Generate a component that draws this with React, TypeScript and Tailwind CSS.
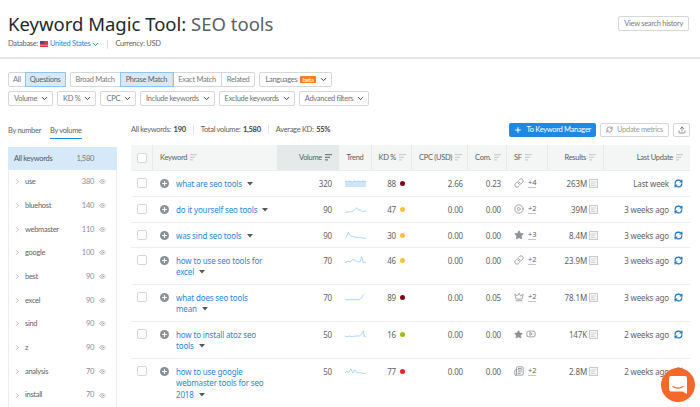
import { ChevronDown, ChevronRight, Eye, Link, CirclePlay, Star, Crown, Newspaper, RefreshCw, Plus, Upload, Youtube } from "lucide-react";

const cols = "grid grid-cols-[22px_124px_62px_33px_40px_56px_39px_41px_56px_86px]";

const sidebar = [
  ["use", "380"],
  ["bluehost", "140"],
  ["webmaster", "110"],
  ["google", "100"],
  ["best", "90"],
  ["excel", "90"],
  ["sind", "90"],
  ["z", "90"],
  ["analysis", "70"],
  ["install", "70"],
];

const rows = [
  { kw: "what are seo tools", vol: "320", trend: "M0 3 L5 4 L9 3 L14 5 L18 3 L22 4 L26 3 L30 4 L34 3 L38 4 L40 3", fill: true, kd: "88", dot: "bg-[#7f0a17]", cpc: "2.66", com: "0.23", sf: "link", more: "+4", res: "263M", upd: "Last week", h: "h-[26px]" },
  { kw: "do it yourself seo tools", vol: "90", trend: "M0 11 L12 10 L17 8 L22 4 L26 8 L29 7 L33 10 L40 9", kd: "47", dot: "bg-[#fdc23c]", cpc: "0.00", com: "0.00", sf: "play", more: "+2", res: "39M", upd: "3 weeks ago", h: "h-[26px]" },
  { kw: "was sind seo tools", vol: "90", trend: "M0 11 L3 9 L6 2 L10 7 L14 8 L18 9 L24 10 L30 10 L40 11", kd: "30", dot: "bg-[#fdc23c]", cpc: "0.00", com: "0.00", sf: "star", more: "+3", res: "8.4M", upd: "3 weeks ago", h: "h-[25px]" },
  { kw: "how to use seo tools for", kw2: "excel", vol: "70", trend: "M0 10 L6 8 L10 9 L15 5 L20 7 L25 9 L29 8 L32 1 L35 10 L40 10", kd: "46", dot: "bg-[#fdc23c]", cpc: "0.00", com: "0.00", sf: "link", more: "+2", res: "23.9M", upd: "3 weeks ago", h: "h-[37px]" },
  { kw: "what does seo tools", kw2: "mean", vol: "70", trend: "M0 10 L26 10 L29 9 L32 7 L35 2", kd: "89", dot: "bg-[#7f0a17]", cpc: "0.00", com: "0.05", sf: "crown", more: "+2", res: "78.1M", upd: "3 weeks ago", h: "h-[37px]" },
  { kw: "how to install atoz seo", kw2: "tools", vol: "50", trend: "M0 9 L4 10 L8 9 L14 10 L20 9 L27 9 L31 7 L35 1 L37 10 L40 10", kd: "16", dot: "bg-[#9bbb14]", cpc: "0.00", com: "0.00", sf: "starvideo", more: "", res: "147K", upd: "2 weeks ago", h: "h-[37px]" },
  { kw: "how to use google", kw2: "webmaster tools for seo", kw3: "2018", vol: "50", trend: "M0 9 L4 6 L7 9 L11 3 L15 9 L19 4 L23 9 L28 8 L33 10 L40 9", kd: "77", dot: "bg-[#f01d26]", cpc: "0.00", com: "0.00", sf: "news", more: "+2", res: "2.8M", upd: "2 weeks ago", h: "h-[50px]" },
];

function Sort({ dark }: { dark?: boolean }) {
  return (
    <svg width="7" height="7" viewBox="0 0 7 7" className="ml-[3px] shrink-0">
      <path d="M0 .7H7M0 3.3H5M0 5.9H3" stroke={dark ? "#5f6368" : "#c4c7c8"} strokeWidth="1" fill="none" />
    </svg>
  );
}

function Caret() {
  return (
    <svg width="6" height="4" viewBox="0 0 6 4" className="inline-block ml-[5px] align-[1px]">
      <path d="M0 0H6L3 3.6Z" fill="#55595c" />
    </svg>
  );
}

function Pill({ label, extra }: { label: string; extra?: React.ReactNode }) {
  return (
    <div className="h-[15px] pl-[5px] pr-[3px] flex items-center gap-[3px] border border-[#d5d8d8] rounded-[2px] text-[#6f7375] bg-white">
      {label}
      {extra}
      <ChevronDown size={9} strokeWidth={2.5} className="text-[#333] shrink-0" />
    </div>
  );
}

function Seg({ label, on, last, tight }: { label: string; on?: boolean; last?: boolean; tight?: boolean }) {
  return (
    <div className={`h-[13px] ${tight ? "px-[4px]" : "px-[5px]"} flex items-center ${on ? "bg-[#d5e9f8] outline outline-[#8fc4ec] text-[#5c6265] z-10" : "text-[#777b7d]"} ${last ? "" : "border-r border-[#d5d8d8]"}`}>
      {label}
    </div>
  );
}

function SfIcon({ kind }: { kind: string }) {
  const c = "text-[#8b9195]";
  if (kind === "link") return <Link size={10} className={c} />;
  if (kind === "play") return <CirclePlay size={10} className={c} />;
  if (kind === "star") return <Star size={10} className={c} fill="#8b9195" />;
  if (kind === "crown") return <Crown size={10} className={c} />;
  if (kind === "news") return <Newspaper size={10} className={c} />;
  return (
    <span className="flex items-center gap-[3px]">
      <Star size={9} className={c} fill="#8b9195" />
      <Youtube size={10} className={c} />
    </span>
  );
}

function Spark({ d, fill }: { d: string; fill?: boolean }) {
  return (
    <svg width="21" height="8" viewBox="0 0 40 12" preserveAspectRatio="none" className="shrink-0">
      {fill && <path d={`${d} V12 H0 Z`} fill="#cfe6fa" />}
      <path d={d} fill="none" stroke="#8cc6f5" strokeWidth="1.2" />
    </svg>
  );
}

export default function App() {
  return (
    <div className="relative h-[407px] overflow-hidden bg-white text-[7.5px] tracking-[-0.3px] text-[#5f6366] font-['Lato','Noto_Sans',sans-serif]">
      <div className="h-[59px] border-b-2 border-[#e6e8e8] px-2 flex justify-between">
        <div>
          <h1 className="mt-[10px] text-[18.5px] leading-[28px] tracking-normal text-[#24282b] font-['Noto_Sans',sans-serif]">
            Keyword Magic Tool: <span className="text-[#5c6063]">SEO tools</span>
          </h1>
          <div className="mt-[1px] flex items-center leading-[10px]">
            <span>Database:</span>
            <svg width="8" height="6" viewBox="0 0 8 6" className="mx-[2px]">
              <rect width="8" height="6" fill="#d23b4a" />
              <rect width="4" height="3" fill="#3b4f9e" />
              <path d="M0 4.3H8" stroke="#f5c6cb" strokeWidth=".6" />
            </svg>
            <span className="text-[#2b86d6]">United States</span>
            <ChevronDown size={9} strokeWidth={2.5} className="text-[#1f7bc9] ml-[1px]" />
            <span className="w-px h-[9px] bg-[#dfe1e1] mx-[7px]" />
            <span>Currency: USD</span>
          </div>
        </div>
        <div className="mt-[16px] mr-[3px] h-[15px] px-[5px] flex items-center border border-[#d5d8d8] rounded-[2px] text-[#777b7d]">
          View search history
        </div>
      </div>

      <div className="px-2 pt-[13px] flex flex-col gap-[4px]">
        <div className="flex gap-[4px]">
          <div className="flex border border-[#d5d8d8] rounded-[2px]">
            <Seg label="All" tight />
            <Seg label="Questions" on last tight />
          </div>
          <div className="flex border border-[#d5d8d8] rounded-[2px]">
            <Seg label="Broad Match" />
            <Seg label="Phrase Match" on />
            <Seg label="Exact Match" />
            <Seg label="Related" last />
          </div>
          <Pill
            label="Languages"
            extra={<span className="h-[7px] px-[2px] flex items-center rounded-[1px] bg-[#ff7f1e] text-white text-[6.5px]">beta</span>}
          />
        </div>
        <div className="flex gap-[4px]">
          <Pill label="Volume" />
          <Pill label="KD %" />
          <Pill label="CPC" />
          <Pill label="Include keywords" />
          <Pill label="Exclude keywords" />
          <Pill label="Advanced filters" />
        </div>
      </div>

      <div className="mt-[16px] pl-2 pr-[10px] flex">
        <div className="w-[109px] shrink-0 mr-[14px]">
          <div className="flex gap-[9px] h-[17px] pt-[3px]">
            <span>By number</span>
            <span className="h-[14px] border-b border-[#1e88e5]">By volume</span>
          </div>
          <div className="mt-[8px] border-x border-[#eceeee] h-[300px]">
            <div className="h-[23px] -mx-px px-[6px] flex items-center justify-between pr-[23px] bg-[#d5e9f8] text-[#53575a]">
              <span>All keywords</span>
              <span className="text-[#777b7d]">1,580</span>
            </div>
            {sidebar.map(([name, n]) => (
              <div key={name} className="h-[23.7px] pl-[5px] pr-[10px] flex items-center">
                <ChevronRight size={7} className="text-[#888]" />
                <span className="ml-[4px] flex-1">{name}</span>
                <span className="text-[#8a8e90]">{n}</span>
                <Eye size={7} className="ml-[5px] text-[#999]" />
              </div>
            ))}
          </div>
        </div>

        <div className="flex-1">
          <div className="h-[23px] flex items-center -mt-[4px]">
            <span>All keywords: <b className="text-[#444] font-bold ml-[1px]">190</b></span>
            <span className="w-px h-[9px] bg-[#e3e5e5] mx-[7px]" />
            <span>Total volume: <b className="text-[#444] font-bold ml-[1px]">1,580</b></span>
            <span className="w-px h-[9px] bg-[#e3e5e5] mx-[7px]" />
            <span>Average KD: <b className="text-[#444] font-bold ml-[1px]">55%</b></span>
            <div className="ml-auto flex gap-[4px]">
              <div className="h-[14px] px-[5px] flex items-center gap-[4px] rounded-[2px] bg-[#1e88e5] text-white">
                <Plus size={8} strokeWidth={3} />
                To Keyword Manager
              </div>
              <div className="h-[14px] px-[5px] flex items-center gap-[4px] border border-[#d5d8d8] rounded-[2px] text-[#999c9e]">
                <RefreshCw size={7} className="text-[#666]" />
                Update metrics
              </div>
              <div className="w-[17px] h-[14px] flex items-center justify-center border border-[#d5d8d8] rounded-[2px]">
                <Upload size={8} className="text-[#555]" />
              </div>
            </div>
          </div>

          <div className={`${cols} h-[26px] mt-[4px] bg-[#f4f5f5] border-b border-[#eceeee] text-[#5b5f62]`}>
            <div className="border-r border-[#e8eaea] flex items-center justify-center">
              <span className="w-[10px] h-[10px] rounded-[2px] border border-[#d5d8d8] bg-white" />
            </div>
            <div className="pl-[7px] flex items-center">Keyword<Sort /></div>
            <div className="bg-[#e6e9e9] flex items-center justify-end pr-[7px]">Volume<Sort dark /></div>
            <div className="border-r border-[#e8eaea] flex items-center justify-center">Trend</div>
            <div className="border-r border-[#e8eaea] flex items-center justify-end pr-[5px]">KD %<Sort /></div>
            <div className="border-r border-[#e8eaea] flex items-center justify-end pr-[5px]">CPC (USD)<Sort /></div>
            <div className="border-r border-[#e8eaea] flex items-center justify-end pr-[5px]">Com.<Sort /></div>
            <div className="border-r border-[#e8eaea] flex items-center pl-[7px]">SF<Sort /></div>
            <div className="border-r border-[#e8eaea] flex items-center justify-end pr-[7px]">Results<Sort /></div>
            <div className="flex items-center justify-end pr-[7px]">Last Update<Sort /></div>
          </div>

          {rows.map((r) => (
            <div key={r.kw} className={`${cols} ${r.h} border-b border-[#eceeee] text-[8px] tracking-[-0.15px] leading-[11.4px] pt-[7px] items-start font-['Noto_Sans',sans-serif]`}>
              <div className="flex justify-center">
                <span className="w-[10px] h-[10px] rounded-[2px] border border-[#d5d8d8]" />
              </div>
              <div className="relative pl-[23px] text-[#2b86d6]">
                <span className="absolute left-[7px] top-[1px] w-[9px] h-[9px] rounded-full bg-[#8b9195] flex items-center justify-center">
                  <Plus size={7} strokeWidth={3.5} className="text-white" />
                </span>
                {r.kw}
                {!r.kw2 && <Caret />}
                {r.kw2 && <div>{r.kw2}{!r.kw3 && <Caret />}</div>}
                {r.kw3 && <div>{r.kw3}<Caret /></div>}
              </div>
              <div className="text-right pr-[7px]">{r.vol}</div>
              <div className="flex justify-center pt-[1px]"><Spark d={r.trend} fill={r.fill} /></div>
              <div className="flex items-center justify-end gap-[4px] pr-[7px]">
                {r.kd}
                <span className={`w-[5px] h-[5px] rounded-full ${r.dot}`} />
              </div>
              <div className="text-right pr-[5px]">{r.cpc}</div>
              <div className="text-right pr-[6px]">{r.com}</div>
              <div className="flex items-center gap-[4px] pl-[7px]">
                <SfIcon kind={r.sf} />
                {r.more && <span className="border-b border-[#c4c7c8] leading-[9px] text-[7.5px]">{r.more}</span>}
              </div>
              <div className="flex items-center justify-end gap-[2px] pr-[6px]">
                {r.res}
                <svg width="9" height="9" viewBox="0 0 9 9" className="shrink-0">
                  <rect x=".5" y=".5" width="8" height="8" fill="#f4f5f5" stroke="#c8cbcc" />
                  <path d="M2 3H7M2 4.8H5.5M2 6.5H6.5" stroke="#c8cbcc" strokeWidth=".7" />
                </svg>
              </div>
              <div className="flex items-center justify-end gap-[5px] pr-[7px]">
                {r.upd}
                <RefreshCw size={9} strokeWidth={3} className="text-[#1a6fc2] shrink-0" />
              </div>
            </div>
          ))}
        </div>
      </div>

      <div className="absolute left-[661px] top-[368px] w-[34px] h-[34px] rounded-full bg-[#f4682c] flex items-center justify-center">
        <svg width="18" height="18" viewBox="0 0 18 18">
          <path d="M2 0H16A2 2 0 0 1 18 2V18L13.5 15.5H2A2 2 0 0 1 0 13.5V2A2 2 0 0 1 2 0Z" fill="#fff" />
          <path d="M4 10.5C7 12.5 11 12.5 14 10.5" stroke="#f4682c" strokeWidth="1.2" fill="none" strokeLinecap="round" />
        </svg>
      </div>
    </div>
  );
}
